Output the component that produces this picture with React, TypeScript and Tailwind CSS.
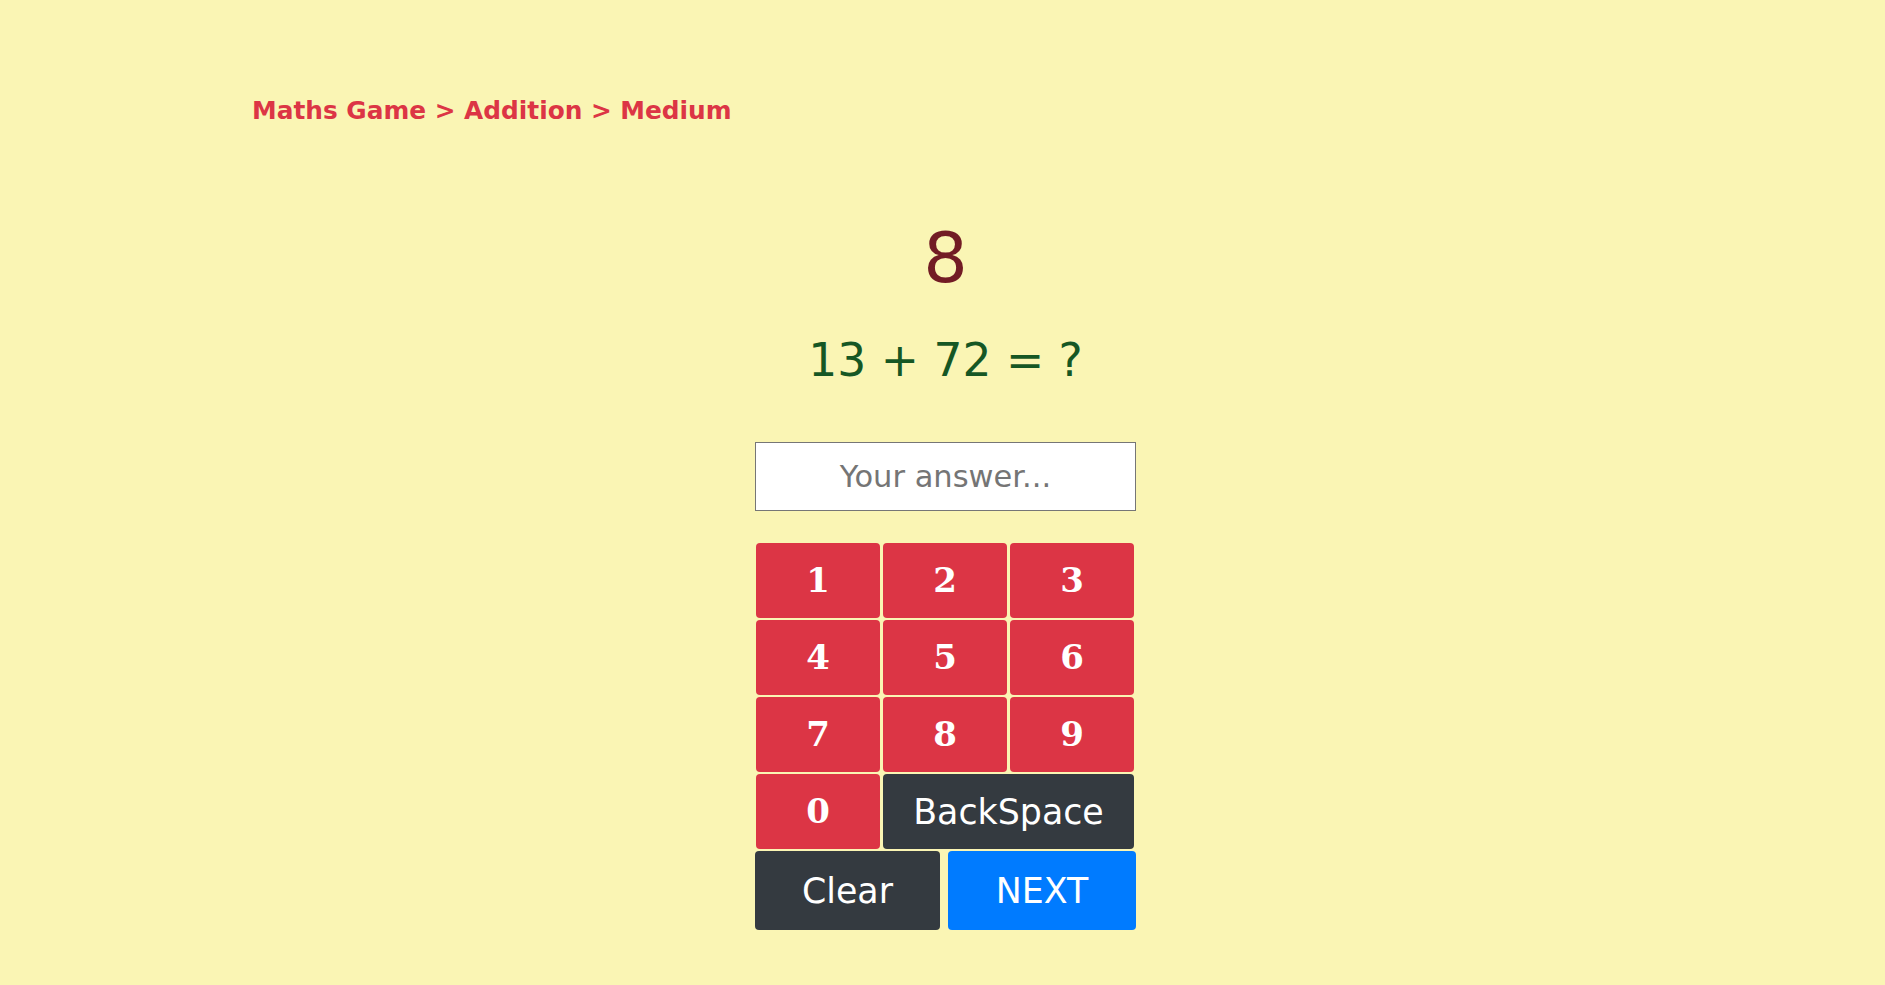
import React, { useState } from 'react';

const keys = ['1', '2', '3', '4', '5', '6', '7', '8', '9'];

const App = () => {
  const [answer, setAnswer] = useState('');

  const press = (k: string) => setAnswer((a) => a + k);

  return (
    <div className="min-h-screen w-full bg-[#faf5b4] font-['DejaVu_Sans',sans-serif]">
      <div className="pt-[99px] pl-[252px]">
        <p className="text-[24.8px] leading-none font-bold text-[#dc3545]">
          Maths Game &gt; Addition &gt; Medium
        </p>
      </div>

      <div className="flex flex-col items-center pl-[6px]">
        <div className="mt-[99px] text-[70px] leading-none text-[#721c24]">8</div>
        <div className="mt-[45px] text-[45.6px] leading-none text-[#155724]">13 + 72 = ?</div>

        <input
          value={answer}
          onChange={(e) => setAnswer(e.target.value)}
          placeholder="Your answer..."
          className="mt-[59px] w-[381px] h-[69px] border border-[#767676] bg-white text-center text-[30.5px] text-black placeholder:text-[#757575] outline-none font-['DejaVu_Sans',sans-serif]"
        />

        <div className="mt-[32px] w-[381px] flex flex-col gap-[2px]">
          <div className="grid grid-cols-[124px_124px_124px] gap-x-[3px] gap-y-[2px] pl-[1px]">
            {keys.map((k) => (
              <button
                key={k}
                onClick={() => press(k)}
                className="h-[75px] rounded bg-[#dc3545] text-white text-[34px] font-bold font-['DejaVu_Serif',serif]"
              >
                {k}
              </button>
            ))}
            <button
              onClick={() => press('0')}
              className="h-[75px] rounded bg-[#dc3545] text-white text-[34px] font-bold font-['DejaVu_Serif',serif]"
            >
              0
            </button>
            <button
              onClick={() => setAnswer((a) => a.slice(0, -1))}
              className="col-span-2 h-[75px] rounded bg-[#343a40] text-white text-[34.8px]"
            >
              BackSpace
            </button>
          </div>
          <div className="flex gap-[8px]">
            <button
              onClick={() => setAnswer('')}
              className="w-[185px] h-[79px] rounded bg-[#343a40] text-white text-[34.8px]"
            >
              Clear
            </button>
            <button className="w-[188px] h-[79px] rounded bg-[#007bff] text-white text-[34.8px]">
              NEXT
            </button>
          </div>
        </div>
      </div>
    </div>
  );
};

export default App;
